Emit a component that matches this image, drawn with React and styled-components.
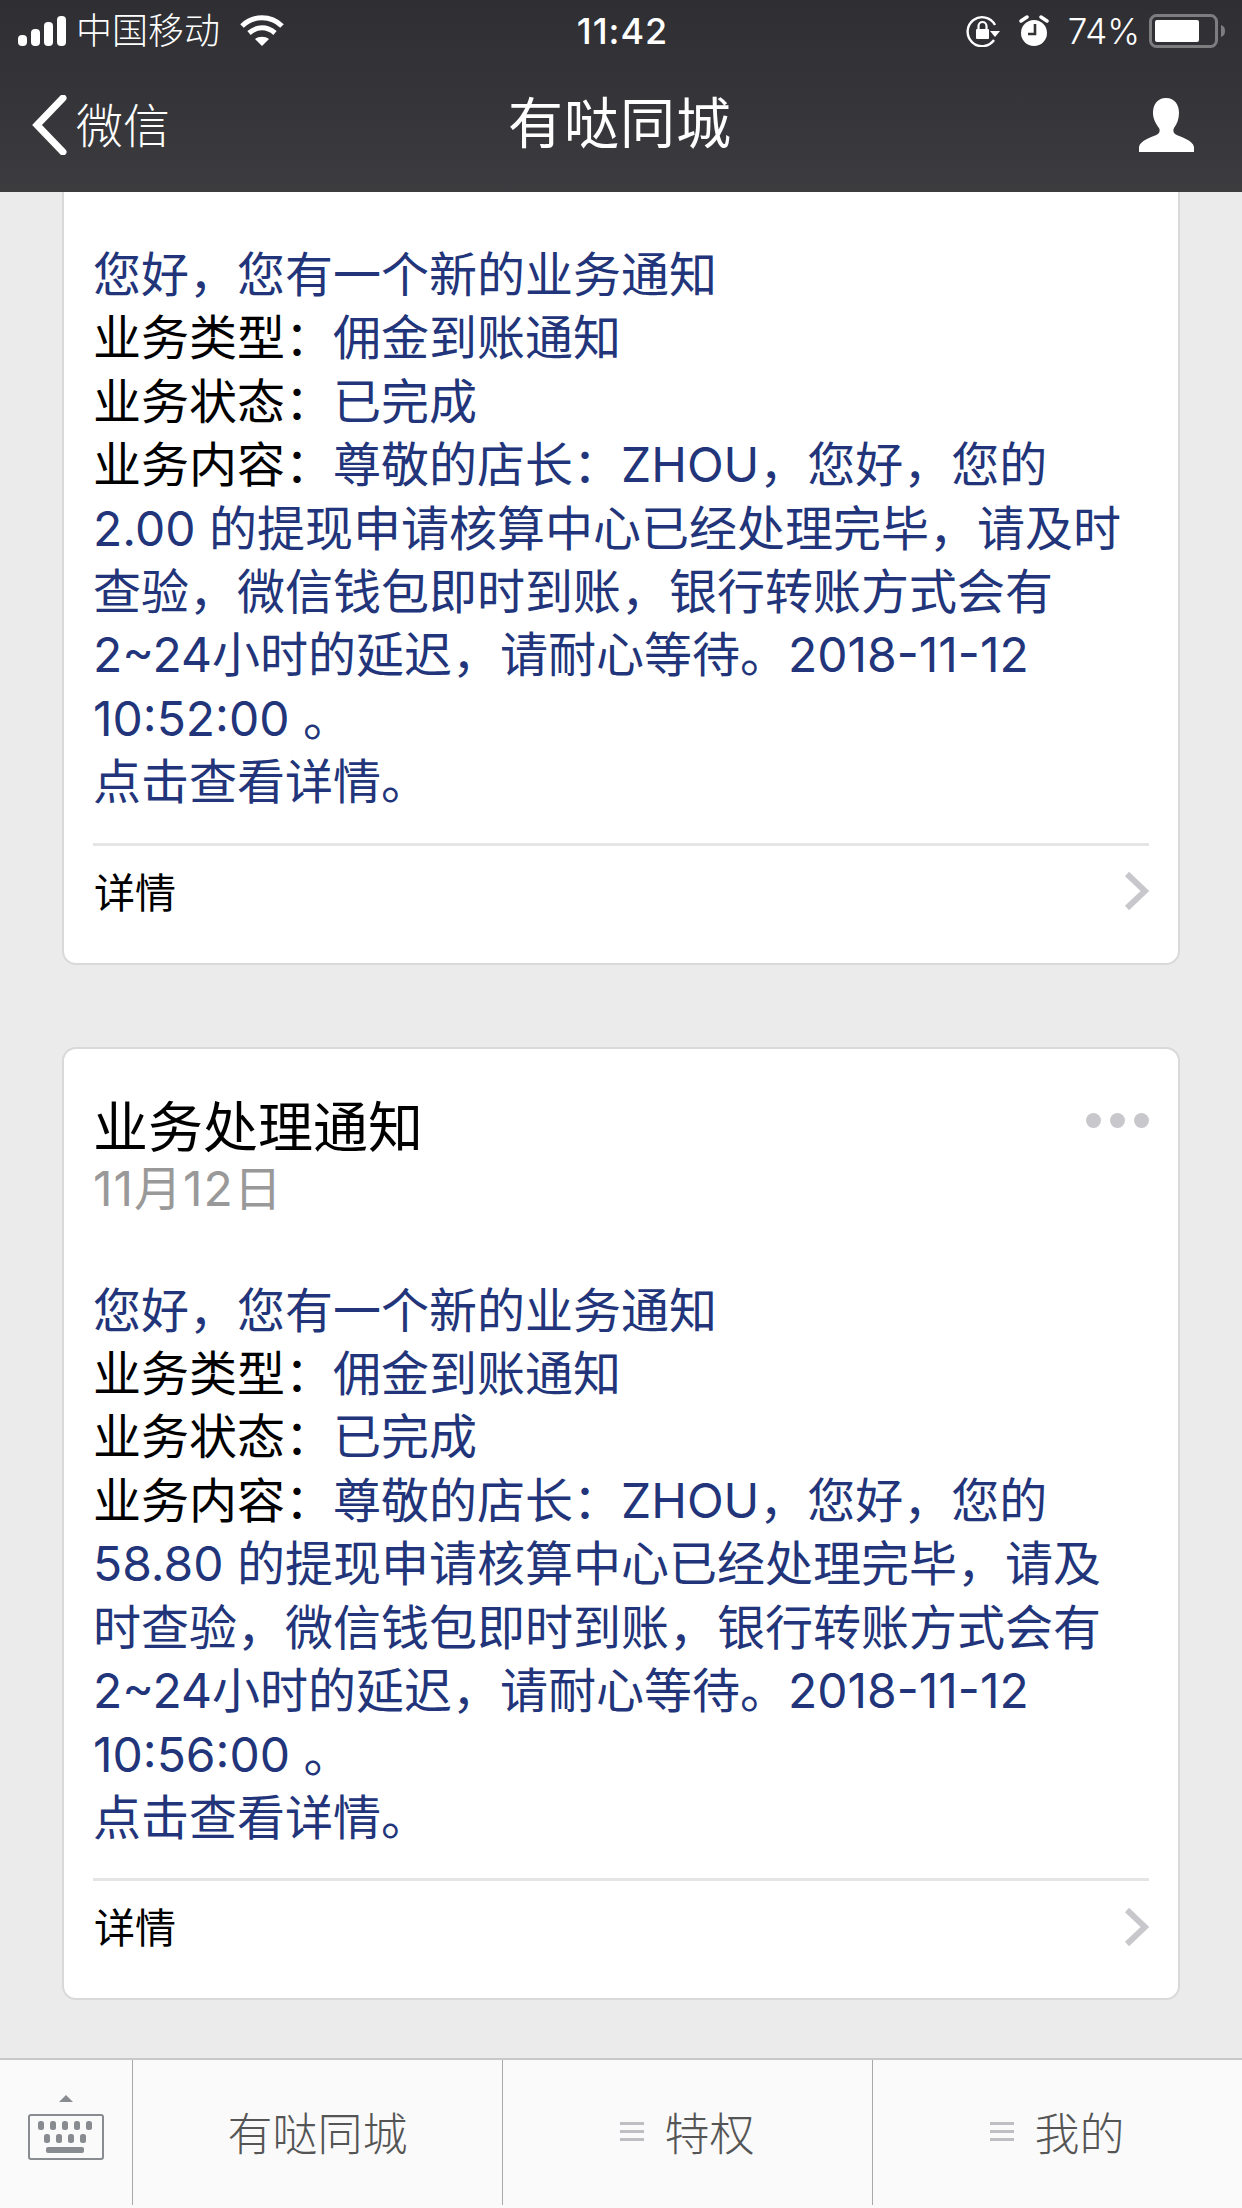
import React from "react";
import styled, { createGlobalStyle } from "styled-components";

const Global = createGlobalStyle`
  html, body { margin: 0; padding: 0; background: #ebebeb; }
  * { box-sizing: border-box; }
`;
const Font = `Inter, "Noto Sans CJK SC", "Noto Sans", sans-serif`;

const Page = styled.div`
  width: 1242px; height: 2208px; overflow: hidden;
  display: flex; flex-direction: column;
  background: #ebebeb; font-family: ${Font};
`;
const Header = styled.header`
  height: 192px; flex: none; color: #fff;
  background: linear-gradient(180deg, #2e2e33 0%, #3c3c3f 100%);
  display: flex; flex-direction: column;
`;
const StatusBar = styled.div`
  height: 62px; padding: 0 15px 0 18px;
  display: grid; grid-template-columns: 1fr auto 1fr; align-items: center;
`;
const StatusSide = styled.div`
  display: flex; align-items: center; gap: ${p => p.$gap}px;
  justify-content: ${p => (p.$end ? "flex-end" : "flex-start")};
`;
const StatusText = styled.span`
  font-size: ${p => (p.$latin ? 35 : 36)}px; line-height: 40px; font-weight: 300; white-space: nowrap;
  margin-right: ${p => (p.$latin ? -10 : 8)}px;
  margin-left: ${p => (p.$latin ? 0 : -2)}px;
`;
const Clock = styled.span`
  font-size: 36px; line-height: 40px; font-weight: 500; letter-spacing: 1px;
`;
const NavBar = styled.div`
  flex: 1; padding: 0 31px 5px;
  display: grid; grid-template-columns: 1fr auto 1fr; align-items: center;
`;
const BackLink = styled.div`
  display: flex; align-items: center; gap: 9px;
  font-size: 47px; font-weight: 300; line-height: 60px;
`;
const BackLabel = styled.span`margin-top: 3px;`;
const NavTitle = styled.div`
  font-size: 55px; line-height: 70px; font-weight: 400; letter-spacing: 1px;
  margin: -3px 0 0 -2px;
`;
const NavRight = styled.div`display: flex; justify-content: flex-end; padding-right: 17px;`;

const Feed = styled.main`
  flex: 1; min-height: 0; overflow: hidden;
  padding: 0 62px; display: flex; flex-direction: column; gap: 82px;
`;
const Card = styled.section`
  background: #fff; border: 2px solid #d9d9d9;
  border-top: ${p => (p.$clipped ? "none" : "2px solid #d9d9d9")};
  border-radius: ${p => (p.$clipped ? "0 0 14px 14px" : "14px")};
  padding: ${p => (p.$clipped ? "51px" : "47px")} 29px 0 29px;
`;
const CardHead = styled.div`
  display: flex; justify-content: space-between; align-items: flex-start;
  margin-bottom: 59px;
`;
const CardTitle = styled.h2`
  margin: 0; font-size: 55px; line-height: 62px; font-weight: 400; color: #000;
`;
const CardDate = styled.div`
  font-size: 48px; line-height: 62px; color: #999; font-weight: 400; letter-spacing: 1px;
`;
const Dots = styled.div`display: flex; gap: 9px; margin-top: 17px;`;
const Dot = styled.i`width: 15px; height: 15px; border-radius: 50%; background: #c8c7cc;`;
const Body = styled.div`
  font-size: 48px; line-height: 63.4px; color: #22357a; font-weight: 400;
`;
const Line = styled.div`white-space: nowrap;`;
const Label = styled.span`color: #000;`;
const Divider = styled.hr`
  margin: 29px 0 0; border: 0; height: 3px; background: #e5e5e5;
`;
const DetailRow = styled.div`
  height: 88px; margin-bottom: 29px;
  display: flex; justify-content: space-between; align-items: center;
  font-size: 41px; color: #000; padding-left: 1px;
`;
const ChevronSvg = styled.svg`margin-top: 3px;`;

const TabBar = styled.nav`
  height: 150px; flex: none; background: #fafafa;
  border-top: 2px solid #c8c8c8;
  display: grid; grid-template-columns: 132px 370px 370px 370px;
`;
const KeyCell = styled.div`
  height: 145px; padding: 34px 0 0 28px;
`;
const Tab = styled.div`
  height: 145px; border-left: 1px solid #a8a8a8; padding-bottom: 3px;
  display: flex; align-items: center; justify-content: center; gap: 20px;
  font-size: 45px; color: #555; font-weight: 300;
`;
const MenuMark = styled.span`
  width: 24px; height: 19px; flex: none;
  border-top: 3px solid #bfbfc3; border-bottom: 3px solid #bfbfc3; position: relative;
  &::after { content: ""; position: absolute; left: 0; right: 0; top: 5px; height: 3px; background: #bfbfc3; }
`;

const Signal = () => (
  <svg width="48" height="30" viewBox="0 0 48 30" fill="#fff">
    <rect x="0" y="19" width="9" height="11" rx="4" />
    <rect x="13" y="13" width="9" height="17" rx="4" />
    <rect x="26" y="6" width="9" height="24" rx="4" />
    <rect x="39" y="0" width="9" height="30" rx="4" />
  </svg>
);
const Wifi = () => (
  <svg width="44" height="32" viewBox="0 0 44 32" fill="none" stroke="#fff" strokeWidth="5">
    <path d="M2 11C13 0 31 0 42 11" />
    <path d="M9 18c8-7 18-7 26 0" />
    <path d="M22 31l-7-7c4-3 10-3 14 0z" fill="#fff" stroke="none" />
  </svg>
);
const RotationLock = () => (
  <svg width="34" height="32" viewBox="0 0 34 32" fill="none">
    <path d="M29 10A14.5 14.5 0 1 0 28 25" stroke="#fff" strokeWidth="2.4" />
    <path d="M24 16h10l-5 6z" fill="#fff" />
    <rect x="10" y="14" width="13" height="10" rx="1" fill="#fff" />
    <path d="M12.5 14v-3a4 4 0 0 1 8 0v3" stroke="#fff" strokeWidth="2.2" />
  </svg>
);
const Alarm = () => (
  <svg width="30" height="32" viewBox="0 0 30 32">
    <circle cx="15" cy="18" r="13" fill="#fff" />
    <path d="M2 6l6-4M28 6l-6-4" stroke="#fff" strokeWidth="3.5" strokeLinecap="round" />
    <path d="M16 9v10h-7" fill="none" stroke="#333336" strokeWidth="2.6" />
  </svg>
);
const Battery = () => (
  <svg width="78" height="34" viewBox="0 0 78 34">
    <rect x="1.5" y="1.5" width="66" height="31" rx="6" fill="none" stroke="#7d7d80" strokeWidth="3" />
    <rect x="6" y="6" width="44" height="22" rx="2" fill="#fff" />
    <path d="M72 11c3 1 4 3 4 6s-1 5-4 6z" fill="#7d7d80" />
  </svg>
);
const BackIcon = () => (
  <svg width="36" height="60" viewBox="0 0 36 60" fill="none">
    <path d="M32 3L6 30l26 27" stroke="#fff" strokeWidth="7" strokeLinecap="round" />
  </svg>
);
const UserIcon = () => (
  <svg width="56" height="54" viewBox="0 0 56 54" fill="#fff">
    <path d="M28 0c9 0 13 7 13 15 0 6-2 11-5 15-1 2-1 4 1 6 5 3 18 6 19 13v5H1v-5c1-7 14-10 19-13 2-2 2-4 1-6-3-4-6-9-6-15 0-8 4-15 13-15z" />
  </svg>
);
const Chevron = () => (
  <ChevronSvg width="26" height="40" viewBox="0 0 26 40" fill="none">
    <path d="M4 3l18 17L4 37" stroke="#c8c7cc" strokeWidth="6" />
  </ChevronSvg>
);
const Keyboard = () => (
  <svg width="76" height="66" viewBox="0 0 76 66" fill="#888b90">
    <path d="M31 8l7-7 7 7z" />
    <rect x="1" y="21" width="74" height="44" rx="2" fill="none" stroke="#888b90" strokeWidth="2" />
    {[10, 22, 34, 46, 58].map(x => <rect key={x} x={x} y="27" width="6" height="9" rx="2.5" />)}
    {[16, 28, 40, 52].map(x => <rect key={x} x={x} y="40" width="6" height="9" rx="2.5" />)}
    <rect x="18" y="53" width="38" height="6" rx="2" />
  </svg>
);

const notices = [
  {
    clipped: true,
    lines: ["2.00 的提现申请核算中心已经处理完毕，请及时", "查验，微信钱包即时到账，银行转账方式会有"],
    stamp: "10:52:00 。",
  },
  {
    title: "业务处理通知",
    date: "11月12日",
    lines: ["58.80 的提现申请核算中心已经处理完毕，请及", "时查验，微信钱包即时到账，银行转账方式会有"],
    stamp: "10:56:00 。",
  },
];

const Notice = ({ n }) => (
  <Card $clipped={n.clipped}>
    {n.title && (
      <CardHead>
        <div>
          <CardTitle>{n.title}</CardTitle>
          <CardDate>{n.date}</CardDate>
        </div>
        <Dots><Dot /><Dot /><Dot /></Dots>
      </CardHead>
    )}
    <Body>
      <Line>您好，您有一个新的业务通知</Line>
      <Line><Label>业务类型：</Label>佣金到账通知</Line>
      <Line><Label>业务状态：</Label>已完成</Line>
      <Line><Label>业务内容：</Label>尊敬的店长：ZHOU，您好，您的</Line>
      {n.lines.map(l => <Line key={l}>{l}</Line>)}
      <Line>2~24小时的延迟，请耐心等待。2018-11-12</Line>
      <Line>{n.stamp}</Line>
      <Line>点击查看详情。</Line>
    </Body>
    <Divider />
    <DetailRow>详情<Chevron /></DetailRow>
  </Card>
);

export default function App() {
  return (
    <Page>
      <Global />
      <Header>
        <StatusBar>
          <StatusSide $gap={12}>
            <Signal />
            <StatusText>中国移动</StatusText>
            <Wifi />
          </StatusSide>
          <Clock>11:42</Clock>
          <StatusSide $end $gap={19}>
            <RotationLock />
            <Alarm />
            <StatusText $latin>74%</StatusText>
            <Battery />
          </StatusSide>
        </StatusBar>
        <NavBar>
          <BackLink><BackIcon /><BackLabel>微信</BackLabel></BackLink>
          <NavTitle>有哒同城</NavTitle>
          <NavRight><UserIcon /></NavRight>
        </NavBar>
      </Header>
      <Feed>
        {notices.map((n, i) => <Notice key={i} n={n} />)}
      </Feed>
      <TabBar>
        <KeyCell><Keyboard /></KeyCell>
        <Tab>有哒同城</Tab>
        <Tab><MenuMark />特权</Tab>
        <Tab><MenuMark />我的</Tab>
      </TabBar>
    </Page>
  );
}
